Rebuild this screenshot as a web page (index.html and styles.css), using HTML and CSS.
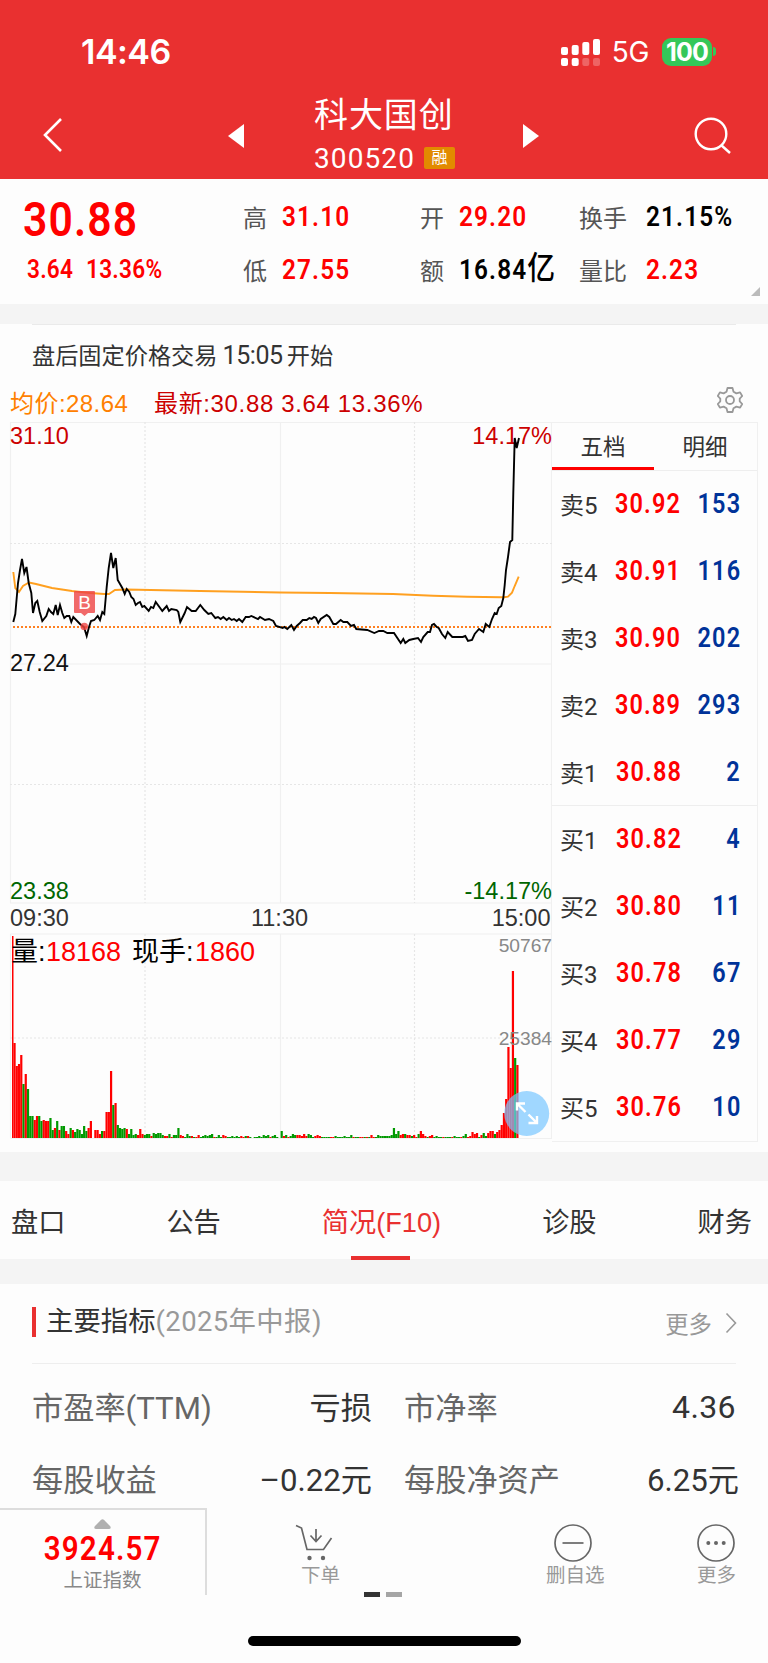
FILE: index.html
```html
<!DOCTYPE html>
<html lang="zh-CN">
<head>
    <meta charset="UTF-8">
    <meta name="viewport" content="width=device-width, initial-scale=1.0">
    <title>科大国创 300520</title>
    <link rel="stylesheet" href="styles.css">
</head>
<body>
    <header class="header">
        <div class="status-bar">
            <span class="clock">14:46</span>
            <div class="status-icons">
                <svg class="signal" width="39" height="28" viewBox="0 0 39 28" fill="#fff">
                    <rect x="0" y="9" width="7" height="8" rx="2"/>
                    <rect x="10.7" y="7" width="7" height="10" rx="2"/>
                    <rect x="21.3" y="4" width="7" height="13" rx="2"/>
                    <rect x="32" y="1" width="7" height="16" rx="2"/>
                    <rect x="0" y="20" width="7" height="8" rx="2"/>
                    <rect x="10.7" y="20" width="7" height="8" rx="2"/>
                    <rect x="21.3" y="20" width="7" height="8" rx="2" opacity=".25"/>
                    <rect x="32" y="20" width="7" height="8" rx="2" opacity=".25"/>
                </svg>
                <span class="network">5G</span>
                <span class="battery">100</span>
                <span class="battery-tip"></span>
            </div>
        </div>
        <div class="title-bar">
            <svg class="back" width="21" height="36" viewBox="0 0 21 36"><path d="M19 2 3 18l16 16" fill="none" stroke="#fff" stroke-width="2.6"/></svg>
            <svg class="arrow-prev" width="16" height="24" viewBox="0 0 16 24"><path d="M16 0v24L0 12z" fill="#fff"/></svg>
            <div class="stock">
                <div class="stock-name">科大国创</div>
                <div class="stock-code">300520<span class="tag">融</span></div>
            </div>
            <svg class="arrow-next" width="16" height="24" viewBox="0 0 16 24"><path d="M0 0v24l16-12z" fill="#fff"/></svg>
            <svg class="search" width="38" height="38" viewBox="0 0 38 38" fill="none" stroke="#fff" stroke-width="2.4"><circle cx="17" cy="17" r="15.3"/><path d="m27 28 9 8"/></svg>
        </div>
    </header>

    <section class="quote">
        <div class="price-block">
            <div class="price num">30.88</div>
            <div class="change"><span class="num">3.64</span><span class="num">13.36%</span></div>
        </div>
        <div class="quote-grid">
            <span class="label">高</span><span class="num red">31.10</span>
            <span class="label">开</span><span class="num red">29.20</span>
            <span class="label">换手</span><span class="num">21.15%</span>
            <span class="label">低</span><span class="num red">27.55</span>
            <span class="label">额</span><span class="num">16.84<i>亿</i></span>
            <span class="label">量比</span><span class="num red">2.23</span>
        </div>
        <span class="corner"></span>
    </section>

    <section class="market">
        <div class="notice">盘后固定价格交易<span>15:05</span>开始</div>
        <div class="legend">
            <span class="avg">均价:28.64</span>
            <span class="last">最新:30.88 3.64 13.36%</span>
            <svg class="gear" width="26" height="28" viewBox="0 0 26 28" fill="none" stroke="#999" stroke-width="1.8" stroke-linejoin="round">
                <path d="M10.5 2h5l1 3.7 2.9 1.7 3.7-1 2.1 3.6-2.5 2.7v2.6l2.5 2.7-2.1 3.6-3.7-1-2.9 1.7-1 3.7h-5l-1-3.7-2.9-1.7-3.7 1L.8 18l2.5-2.7v-2.6L.8 10l2.1-3.6 3.7 1 2.9-1.7z"/>
                <circle cx="13" cy="14" r="4"/>
            </svg>
        </div>
        <div class="board">
            <svg class="chart" width="552" height="720" viewBox="0 422 552 720">
                <g class="grid">
                    <path d="M10.5 903.5v-481H552M10.5 664H552M10.5 903H552M10.5 934H552M10.5 1138.5H552M280.5 422V903M280.5 934V1138M10.5 934V1138M551.5 422V1138"/>
                    <path class="dots" d="M145 422V903M145 934V1138M414.5 422V903M414.5 934V1138M10 543.5H552M10 784.5H552M10 1038H552"/>
                </g>
                <g id="volume"></g>
                <g class="axis">
                    <text class="up" x="10" y="444">31.10</text>
                    <text class="up" x="552" y="444" text-anchor="end">14.17%</text>
                    <text x="10" y="671">27.24</text>
                    <text class="down" x="10" y="899">23.38</text>
                    <text class="down" x="552" y="899" text-anchor="end">-14.17%</text>
                    <text class="time" x="10" y="926">09:30</text>
                    <text class="time" x="279.5" y="926" text-anchor="middle">11:30</text>
                    <text class="time" x="550.5" y="926" text-anchor="end">15:00</text>
                    <text class="vol" x="552" y="952" text-anchor="end">50767</text>
                    <text class="vol" x="552" y="1045" text-anchor="end">25384</text>
                    <text class="vol-title" x="11" y="961">量:<tspan class="red" x="46">18168</tspan></text>
                    <text class="vol-title" x="132" y="961">现手:<tspan class="red" x="195">1860</tspan></text>
                </g>
                <path class="base-line" d="M13 627H551"/>
                <polyline class="avg-line" points="13.3,572 15.3,588 19,592 23,586 29,582.5 36,584 52,588 72,591 90,593 104,594 109,594 115,590 126,589.5 200,591 280,592.5 330,593 393,594 433,595.7 467,596.7 501.7,597.3 504,597.3 508,596.7 512,592.7 514.7,586 518.7,576.7"/>
                <polyline class="price-line" points="13.3,622 15.3,614 18,583 20,570 22,559 24.3,573 26.5,567 28.7,583 31.3,593 33,613 35.3,603 37.3,601 39.7,612 42.3,621 46.3,616 48.7,609 51,612 53.3,614 55.7,605 57.7,615 60,605 62.3,613 64.3,618 66.7,616 69.3,616 71.3,622 73.3,617 80,624 84,627 86.7,636 89,627 91,621 94.3,620 97.7,616 100,620 102.3,612 104.3,614 106.7,587 108.7,568 111,553 113.3,568 115.7,558 117.7,580 122.3,588 124.7,594 126.7,589 129.3,592 131.3,597 133.5,599 135.7,605 138,603 140,602 142.3,607 144.3,606 148.7,611 151,607 153.3,608 155.7,602 162.3,611 166.7,606 169,611 171.3,609 176.7,610 178.3,612 180.3,622 184.7,613 187,607 191.7,611 195.7,611 200.3,605 204.3,610 208.3,614 211.3,613 215.3,618 218,617 220.7,619 223.3,617 226.7,620 229,618 231.7,620 234,619 236.7,621 239,619 242.3,622 245.7,617 249,617 251.3,616 258,619 260,617 265,620 269,619 273.3,621 276,626 282.7,628 284.3,627 287.3,629 291.3,625 294,630 296.7,626 300,623 302.7,620 306.7,620 309.3,618 311.7,619 314,617 316,618 318.3,623 320.7,619 326.7,615 329.3,617 333.3,624 336,624 340.7,620 343.3,622 347.3,622 351,626 354,625 356.3,629 367.3,630 374.3,633 379,631 383.3,631 387.3,633 394,633 400.7,643 403.3,639 405.3,643 409.3,640 413.3,639 418,638 421,642 423.3,637 427.7,632 430,632 432,625 434,624 436.7,627 438.7,628 442,634 445.3,638 447.7,632 452.3,637 456.7,637 460,637 462.7,637 465.3,636 468,641 472,640 474.7,634 479,629 483.3,632 485.7,624 489.3,627 492,619 494.7,613 496.7,614 498.7,608 501.3,606 503.3,598 504.7,585 506,570 508,557 510,542 512.3,540 513.3,493 514.7,438 516.7,448 519,438"/>
                <g class="marker">
                    <circle cx="84.3" cy="626.5" r="3.8"/>
                    <path d="M75 591h19a1 1 0 0 1 1 1v20a1 1 0 0 1-1 1h-6l-3.5 3-3.5-3h-6a1 1 0 0 1-1-1v-20a1 1 0 0 1 1-1z"/>
                    <text x="84.5" y="608.5" text-anchor="middle">B</text>
                </g>
                <g class="expand">
                    <circle cx="526.7" cy="1113.5" r="22.5"/>
                    <path d="M517 1110.5v-7h8M517.5 1104l8 8M537 1116v7h-8.5M536.5 1122.5l-8-8"/>
                </g>
            </svg>

            <div class="order-book">
                <div class="book-tabs"><span class="active">五档</span><span>明细</span></div>
                <div class="book-rows">
                    <div class="row"><span>卖5</span><b>30.92</b><em>153</em></div>
                    <div class="row"><span>卖4</span><b>30.91</b><em>116</em></div>
                    <div class="row"><span>卖3</span><b>30.90</b><em>202</em></div>
                    <div class="row"><span>卖2</span><b>30.89</b><em>293</em></div>
                    <div class="row"><span>卖1</span><b>30.88</b><em>2</em></div>
                </div>
                <div class="book-rows">
                    <div class="row"><span>买1</span><b>30.82</b><em>4</em></div>
                    <div class="row"><span>买2</span><b>30.80</b><em>11</em></div>
                    <div class="row"><span>买3</span><b>30.78</b><em>67</em></div>
                    <div class="row"><span>买4</span><b>30.77</b><em>29</em></div>
                    <div class="row"><span>买5</span><b>30.76</b><em>10</em></div>
                </div>
            </div>
        </div>
    </section>

    <nav class="tabs">
        <span>盘口</span>
        <span>公告</span>
        <span class="active">简况(F10)</span>
        <span>诊股</span>
        <span>财务</span>
    </nav>

    <section class="indicators">
        <div class="section-head">
            <h2>主要指标<span>(2025年中报)</span></h2>
            <div class="more">更多<svg width="12" height="22" viewBox="0 0 12 22"><path d="m1.5 1.5 9 9.5-9 9.5" fill="none" stroke="#999" stroke-width="1.6"/></svg></div>
        </div>
        <div class="metrics">
            <div class="metric"><span>市盈率(TTM)</span><b>亏损</b></div>
            <div class="metric"><span>市净率</span><b class="plain">4.36</b></div>
            <div class="metric"><span>每股收益</span><b>–0.22元</b></div>
            <div class="metric last-col"><span>每股净资产</span><b>6.25元</b></div>
        </div>
    </section>

    <footer class="footer">
        <div class="toolbar">
            <div class="index">
                <svg width="19" height="11" viewBox="0 0 19 11"><path d="M8 .8q1.5-1.3 3 0l7 7.2q1.500 3-1.500 3h-14q-3 0-1.500-3z" fill="#b0b0b0"/></svg>
                <div class="index-value">3924.57</div>
                <div class="index-name">上证指数</div>
            </div>
            <div class="tool order">
                <svg width="38" height="38" viewBox="0 0 38 38" fill="none" stroke="#666" stroke-width="1.7">
                    <path d="M1 1.5 6.5 4l5.5 21.5h16.5L36.5 14M21 5v12M15.5 11.5l5.5 6 5.5-6"/>
                    <g fill="#666" stroke="none"><circle cx="14.5" cy="34" r="2.2"/><circle cx="28" cy="34" r="2.2"/></g>
                </svg>
                <span>下单</span>
            </div>
            <div class="tool remove">
                <svg width="38" height="38" viewBox="0 0 38 38" fill="none" stroke="#666" stroke-width="1.7"><circle cx="19" cy="19" r="18"/><path d="M8.5 19h21"/></svg>
                <span>删自选</span>
            </div>
            <div class="tool others">
                <svg width="38" height="38" viewBox="0 0 38 38" fill="#666"><circle cx="19" cy="19" r="18" fill="none" stroke="#666" stroke-width="1.7"/><circle cx="11.3" cy="19" r="2"/><circle cx="19" cy="19" r="2"/><circle cx="26.7" cy="19" r="2"/></svg>
                <span>更多</span>
            </div>
        </div>
        <div class="pager"><i class="on"></i><i></i></div>
        <div class="home-bar"></div>
    </footer>

    <script src="script.js"></script>
</body>
</html>
```

FILE: styles.css
```css
* {
    margin: 0;
    padding: 0;
    box-sizing: border-box;
}

body {
    width: 768px;
    height: 1663px;
    overflow: hidden;
    background: #fdfdfd;
    color: #333;
    font-family: Roboto, 'Noto Sans CJK SC', sans-serif;
}

svg {
    display: block;
}

i, em {
    font-style: normal;
}

.red {
    color: #ff0000;
    fill: #ff0000;
}

/* condensed digits */
.num, .row b, .row em, .index-value {
    font-weight: 600;
    letter-spacing: 1.3px;
    transform: scaleX(0.87);
    transform-origin: left;
}

/* header */
.header {
    height: 179px;
    background: #e93030;
    color: #fff;
}

.status-bar {
    height: 103px;
    padding: 0 52px 0 81px;
    display: flex;
    justify-content: space-between;
    align-items: center;
    font-family: Inter, sans-serif;
}

.clock {
    font-size: 34px;
    font-weight: 600;
    letter-spacing: -0.5px;
}

.status-icons {
    display: flex;
    align-items: center;
}

.network {
    margin: 1px 13px 0 12px;
    font-size: 28px;
    letter-spacing: -0.3px;
}

.battery {
    width: 50px;
    height: 28px;
    line-height: 28px;
    border-radius: 9px;
    background: #34c759;
    font-size: 25px;
    font-weight: 700;
    letter-spacing: -0.9px;
    text-align: center;
}

.battery-tip {
    width: 3px;
    height: 9px;
    margin-left: 1px;
    border-radius: 0 4px 4px 0;
    background: #34c759;
}

.title-bar {
    height: 76px;
    padding: 0 36px 0 42px;
    display: flex;
    align-items: flex-start;
}

.back {
    margin-top: 14px;
}

.arrow-prev {
    margin: 21px 0 0 165px;
}

.stock {
    width: 279px;
    padding-left: 70px;
}

.stock-name {
    height: 43px;
    line-height: 25px;
    font-size: 34px;
    letter-spacing: 0.9px;
}

.stock-code {
    height: 24px;
    display: flex;
    align-items: center;
    font-size: 28px;
    letter-spacing: 1.1px;
}

.tag {
    width: 31px;
    height: 22px;
    margin-left: 9px;
    border-radius: 2px;
    background: #e28a00;
    font-size: 16px;
    line-height: 21px;
    letter-spacing: 0;
    text-align: center;
}

.arrow-next {
    margin-top: 21px;
}

.search {
    margin: 14px 0 0 auto;
}

/* quote */
.quote {
    position: relative;
    height: 125px;
    display: flex;
}

.price-block {
    width: 243px;
    padding: 17px 0 0 23px;
    color: #ff0000;
}

.price {
    height: 48px;
    line-height: 48px;
    font-size: 49px;
}

.change {
    display: flex;
    padding-left: 4px;
    margin-top: 11px;
    line-height: 28px;
    font-size: 26px;
}

.change .num {
    width: 59px;
    letter-spacing: 0.3px;
}

.quote-grid {
    display: grid;
    grid-template-columns: 39px 138px 39px 120px 67px 100px;
    grid-template-rows: 53px 53px;
    padding-top: 11px;
    color: #000;
    font-size: 28px;
    line-height: 53px;
    white-space: nowrap;
}

.quote-grid .label {
    color: #555;
    font-size: 24px;
    line-height: 59px;
}

.quote-grid i {
    font-size: 32px;
    font-weight: 500;
    line-height: 1;
}

.corner {
    position: absolute;
    right: 8px;
    bottom: 8px;
    border-left: 9px solid transparent;
    border-bottom: 9px solid #bbb;
}

/* chart and order book */
.market {
    height: 848px;
    border-top: 20px solid #f4f4f4;
}

.notice {
    height: 61px;
    margin: 0 32px;
    border-top: 1px solid #eaeaea;
    font-size: 23.2px;
    line-height: 61px;
}

.notice span {
    margin: 0 4px 0 5px;
    font-size: 25px;
    letter-spacing: -0.4px;
}

.legend {
    height: 37px;
    padding: 0 25px 0 10px;
    display: flex;
    align-items: center;
    font-family: 'Liberation Sans', 'Noto Sans CJK SC', sans-serif;
    font-size: 24px;
    line-height: 37px;
}

.avg {
    width: 144px;
    color: #ff8000;
    letter-spacing: 0.45px;
}

.last {
    color: #cc0000;
    letter-spacing: 0.65px;
}

.gear {
    margin: -7px 0 0 auto;
}

.board {
    display: flex;
    height: 720px;
}

.grid path {
    fill: none;
    stroke: #f0f0f0;
    stroke-width: 1.2;
}

.grid .dots {
    stroke: #e6e6e6;
    stroke-dasharray: 2 2;
}

.axis {
    font-family: 'Liberation Sans', 'Noto Sans CJK SC', sans-serif;
    font-size: 23.5px;
    fill: #111;
}

.axis .up {
    fill: #cc0000;
}

.axis .down {
    fill: #006600;
}

.axis .time {
    fill: #333;
}

.axis .vol {
    font-size: 19.2px;
    fill: #888;
}

.axis .vol-title {
    font-size: 27px;
    fill: #000;
}

.axis .vol-title .red {
    fill: #ff0000;
}

.base-line {
    stroke: #ff8020;
    stroke-width: 1.8;
    stroke-dasharray: 2 2;
}

.avg-line {
    fill: none;
    stroke: #ffa020;
    stroke-width: 1.9;
}

.price-line {
    fill: none;
    stroke: #000;
    stroke-width: 1.9;
}

.marker {
    fill: rgba(238, 68, 68, 0.8);
}

.marker text {
    fill: #fff;
    font-family: 'Liberation Sans', sans-serif;
    font-size: 19px;
}

.expand circle {
    fill: rgba(120, 198, 255, 0.7);
}

.expand path {
    fill: none;
    stroke: #fff;
    stroke-width: 2.4;
}

.order-book {
    width: 206px;
    height: 720px;
    border: 1px solid #f0f0f0;
    border-left: none;
}

.book-tabs {
    height: 48px;
    display: flex;
    border-bottom: 1px solid #eee;
    font-size: 22.5px;
    line-height: 48px;
    text-align: center;
}

.book-tabs span {
    width: 102px;
    height: 47px;
}

.book-tabs .active {
    border-bottom: 3px solid #ff0000;
}

.book-rows {
    height: 334px;
}

.book-rows + .book-rows {
    height: 336px;
    border-top: 1px solid #eee;
}

.row {
    height: 67px;
    padding: 0 17px 0 8px;
    display: flex;
    align-items: center;
    font-size: 27px;
}

.row span {
    width: 56px;
    margin-top: -3px;
    font-size: 24px;
}

.row b {
    margin-top: -1px;
    color: #ff0000;
}

.row em {
    margin: -1px -1px 0 auto;
    color: #003399;
    transform-origin: right;
}

/* section tabs */
.tabs {
    height: 132px;
    padding: 0 16px 0 11px;
    display: flex;
    justify-content: space-between;
    border-top: 29px solid #f4f4f4;
    border-bottom: 25px solid #f4f4f4;
    font-family: 'Liberation Sans', 'Noto Sans CJK SC', sans-serif;
    font-size: 27.2px;
    line-height: 84px;
}

.tabs .active {
    position: relative;
    color: #e93030;
}

.tabs .active::after {
    content: '';
    position: absolute;
    left: 50%;
    top: 75px;
    width: 59px;
    height: 4px;
    margin-left: -30px;
    background: #e93030;
}

/* indicators */
.indicators {
    height: 224px;
    padding: 0 32px;
}

.section-head {
    height: 80px;
    display: flex;
    justify-content: space-between;
    align-items: center;
    border-bottom: 1px solid #eee;
}

.section-head h2 {
    height: 30px;
    margin-top: -4px;
    padding-left: 10px;
    border-left: 4px solid #e93030;
    font-size: 27.4px;
    font-weight: 400;
    line-height: 30px;
}

.section-head h2 span {
    color: #999;
    letter-spacing: 0.4px;
}

.more {
    display: flex;
    align-items: center;
    gap: 13px;
    margin: -2px -1px 0 0;
    color: #999;
    font-size: 23.4px;
}

.metrics {
    display: grid;
    grid-template-columns: 340px 331px;
    column-gap: 32px;
    grid-template-rows: 72px 72px;
    padding-top: 5px;
}

.metric {
    display: flex;
    justify-content: space-between;
    align-items: center;
    color: #666;
    font-size: 31.2px;
    white-space: nowrap;
}

.metric:nth-child(even) {
    margin-right: -1px;
}

.metrics .last-col {
    margin-right: -4px;
}

.metric b {
    color: #333;
    font-weight: 400;
}

.metric .plain {
    margin-top: 3px;
    font-size: 32px;
    letter-spacing: 0.4px;
}

/* footer */
.footer {
    height: 155px;
}

.toolbar {
    height: 87px;
    display: flex;
    color: #999;
    font-size: 19.5px;
    line-height: 22px;
}

.index {
    width: 207px;
    height: 87px;
    padding-top: 9px;
    display: flex;
    flex-direction: column;
    align-items: center;
    border-top: 2px solid #ddd;
    border-right: 2px solid #ddd;
}

.index-value {
    height: 35px;
    color: #ff0000;
    font-size: 34px;
    line-height: 39px;
    transform-origin: center;
}

.index-name {
    margin-top: 3px;
    color: #888;
    line-height: 28px;
}

.tool {
    padding-top: 16px;
    display: flex;
    flex-direction: column;
}

.tool span {
    line-height: 28px;
}

.order {
    width: 339px;
    padding-left: 88px;
}

.order span {
    margin-left: 6px;
}

.remove {
    width: 151px;
}

.remove svg {
    margin-left: 8px;
}

.pager {
    display: flex;
    justify-content: center;
    gap: 6px;
    margin-top: -3px;
    padding-right: 2px;
}

.pager i {
    width: 16px;
    height: 5px;
    background: #a5a5a5;
}

.pager .on {
    background: #333;
}

.home-bar {
    width: 273px;
    height: 10px;
    margin: 39px 0 0 248px;
    border-radius: 5px;
    background: #000;
}
```

FILE: script.js
```js
// minute volume: r = up, g = down, followed by the bar height
const volume = `
r202 r95 r72 r74 r83 g54 r64 g49 g22 g22 r18 r22 g22 g17 r18 r17 r17 g20 g8 r10
g17 r8 g12 g12 r7 r4 g10 r8 g6 g9 g8 g4 g12 g7 r10 r17 g0 r8 r8 r4
g7 r7 r26 r26 r67 g33 r35 g13 g10 g9 g10 r9 g4 g9 g3 g4 r3 r9 r4 g3
g4 g4 r2 g5 g4 g5 g5 g3 r2 r2 g4 r1 g3 g3 g10 r3 r2 g1 g4 g2
r2 g1 r1 r3 g1 g2 g3 g2 g3 g4 r1 g1 g3 g1 r3 r2 g1 g1 g2 g1
g2 g1 r2 r1 g2 r2 g1 g0 g1 g1 g2 g1 g3 g2 g3 r1 g2 g3 g1 r0
g7 r2 g3 r1 g2 g4 g3 r3 r3 r2 r4 r2 g4 g3 g1 r2 r3 r2 g1 g1
g1 g1 r1 r1 g2 g1 g1 g1 g2 g1 g1 g3 r1 g1 g1 r1 r1 g1 r1 g1
r3 r1 g1 g3 g2 g2 g2 g2 g2 g3 g10 g4 g7 r3 r4 g4 r3 r3 g2 r3
r1 g4 r7 r4 r2 g1 r2 r3 g1 g2 g1 g1 r1 g1 g1 g1 r1 g2 g1 g1
r1 g2 g4 r1 r2 r6 r4 r5 g1 r3 g5 g2 r5 r7 r7 g4 r6 r8 r13 r25
r39 r91 r70 r167 g80 r73
`.trim().split(/\s+/);

const svgNS = 'http://www.w3.org/2000/svg';
const group = document.getElementById('volume');

volume.forEach((item, i) => {
    const height = Number(item.slice(1));
    const bar = document.createElementNS(svgNS, 'rect');
    bar.setAttribute('x', i === 0 ? 12 : 11.2 + i * 2.245);
    bar.setAttribute('y', 1138 - height);
    bar.setAttribute('width', i === 0 ? 1.5 : 2.2);
    bar.setAttribute('height', height);
    bar.setAttribute('fill', item[0] === 'r' ? '#ff0000' : '#009900');
    group.appendChild(bar);
});
```
